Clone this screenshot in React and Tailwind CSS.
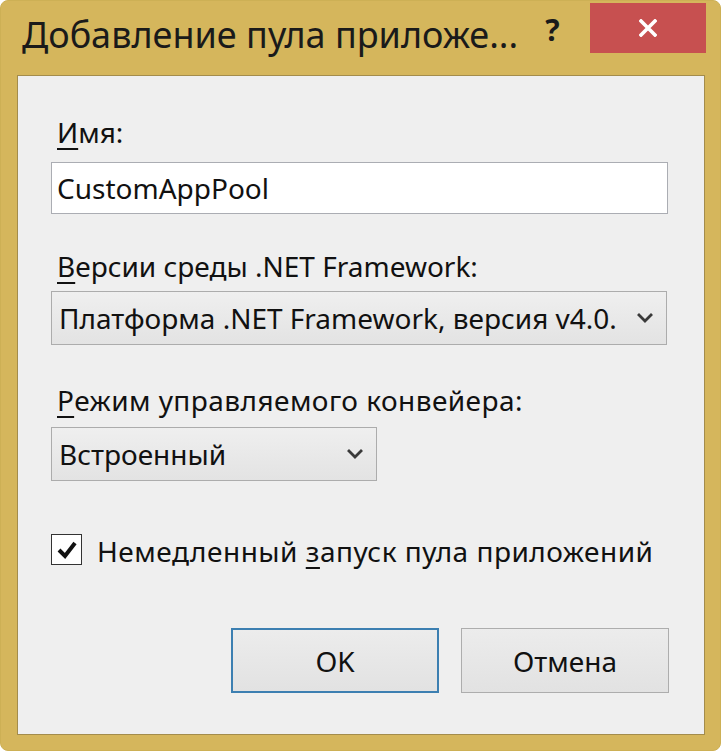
import React from "react";

const font = { fontFamily: '"Noto Sans", "Open Sans", sans-serif' };

function Chevron() {
  return (
    <svg width="16" height="10" viewBox="0 0 16 10" className="block">
      <polyline points="2,2 8,8 14,2" fill="none" stroke="#3a3a3a" strokeWidth="2.8" strokeLinecap="square" />
    </svg>
  );
}

function Select({ width, text }) {
  return (
    <div className={`${width} h-[54px] border border-[#acacac] bg-gradient-to-b from-[#efefef] to-[#e3e3e3] flex items-center justify-between pl-[7px] pr-[13px]`}>
      <span className="text-[28px] leading-[36px] text-[#111] whitespace-nowrap">{text}</span>
      <Chevron />
    </div>
  );
}

export default function App() {
  return (
    <div className="w-[722px] h-[752px] bg-white" style={font}>
      <div className="w-[721px] h-[751px] bg-[#d5b65c] rounded-[8px] border border-[#cdb055] flex flex-col">
        {/* title bar */}
        <div className="h-[74px] flex items-start relative">
          <div className="pl-[21px] pt-[12px] text-[36px] leading-[44px] text-[#1a1a1a] whitespace-nowrap">
            Добавление пула приложе...
          </div>
          <div className="ml-[27px] pt-[9px] text-[30px] leading-[40px] font-bold text-[#1a1a1a]">?</div>
          <div className="ml-auto mr-[14px] mt-[2px] w-[116px] h-[50px] bg-[#c75050] flex items-center justify-center">
            <svg width="18" height="18" viewBox="0 0 18 18">
              <path d="M2 2 L16 16 M16 2 L2 16" stroke="#ffffff" strokeWidth="3.6" strokeLinecap="square" />
            </svg>
          </div>
        </div>
        {/* client area */}
        <div className="ml-[16px] w-[688px] h-[660px] bg-[#efefef] border border-[#a38c4c] flex flex-col pl-[33px] text-[#111]">
          <div className="mt-[38px] h-[36px] pl-[6px] text-[28px] leading-[36px]">
            <span className="underline decoration-[2px] underline-offset-[5px]">И</span>мя:
          </div>
          <div className="mt-[12px] w-[617px] h-[52px] bg-white border border-[#abadb3] flex items-center pl-[5px]">
            <span className="text-[28px] leading-[36px]">CustomAppPool</span>
          </div>
          <div className="mt-[34px] h-[36px] pl-[6px] text-[28px] leading-[36px] whitespace-nowrap">
            <span className="underline decoration-[2px] underline-offset-[5px]">В</span>ерсии среды .NET Framework:
          </div>
          <div className="mt-[7px]">
            <Select width="w-[616px]" text="Платформа .NET Framework, версия v4.0." />
          </div>
          <div className="mt-[37px] h-[36px] pl-[6px] text-[28px] leading-[36px] tracking-[0.45px] whitespace-nowrap">
            <span className="underline decoration-[2px] underline-offset-[5px]">Р</span>ежим управляемого конвейера:
          </div>
          <div className="mt-[9px]">
            <Select width="w-[326px]" text="Встроенный" />
          </div>
          <div className="mt-[52px] h-[36px] flex items-start">
            <div className="mt-[1px] w-[31px] h-[31px] bg-white border border-[#333] flex items-center justify-center">
              <svg width="22" height="20" viewBox="0 0 22 20">
                <path d="M3 10 L9 16 L19 3" fill="none" stroke="#111" strokeWidth="4" strokeLinejoin="miter" />
              </svg>
            </div>
            <div className="ml-[15px] text-[28px] leading-[36px] tracking-[0.5px] whitespace-nowrap">
              Немедленный <span className="underline decoration-[2px] underline-offset-[5px]">з</span>апуск пула приложений
            </div>
          </div>
          <div className="mt-[59px] flex justify-end pr-[35px] gap-[22px]">
            <div className="w-[208px] h-[65px] border-2 border-[#3c7fb1] bg-gradient-to-b from-[#ececec] to-[#e2e2e2] flex items-center justify-center text-[28px] leading-[36px]">
              OK
            </div>
            <div className="w-[208px] h-[65px] border border-[#adadad] bg-gradient-to-b from-[#ececec] to-[#e2e2e2] flex items-center justify-center text-[28px] leading-[36px]">
              Отмена
            </div>
          </div>
        </div>
      </div>
    </div>
  );
}
